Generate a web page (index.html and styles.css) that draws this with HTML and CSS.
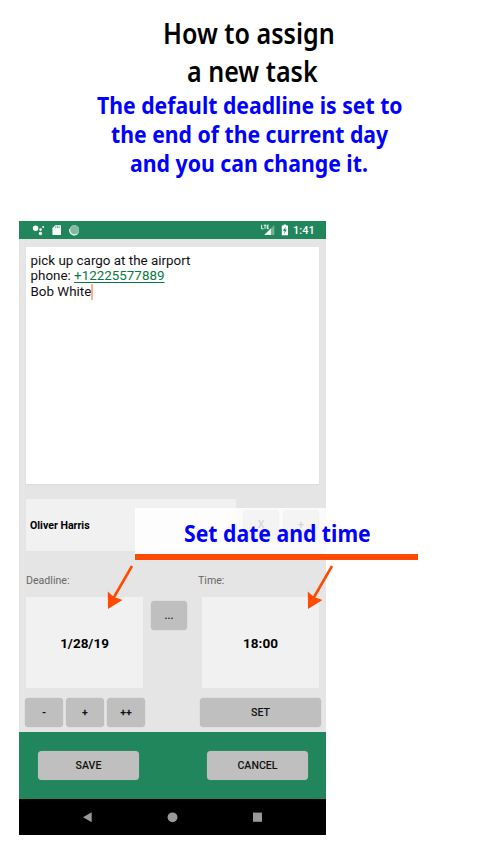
FILE: index.html
```html
<!DOCTYPE html>
<html lang="en">
<head>
<meta charset="utf-8">
<title>How to assign a new task</title>
<link rel="stylesheet" href="styles.css">
</head>
<body>
<header class="intro">
  <h1><span class="line t1">How to assign</span><span class="line t2">a new task</span></h1>
  <p><span class="line b1">The default deadline is set to</span><span class="line b2">the end of the current day</span><span class="line b3">and you can change it.</span></p>
</header>
<main class="phone">
  <div class="status">
    <svg class="left-icons" width="60" height="18" viewBox="0 0 60 18">
      <g fill="#fff"><circle cx="16.6" cy="7.2" r="2.7"/><circle cx="21.6" cy="8.6" r="1.3"/><circle cx="24.2" cy="6" r=".9"/><circle cx="21.4" cy="12.5" r="1.7"/>
      <path d="M36.3 4.2h5.7v9.9h-8.6V7.3z"/></g>
      <path d="M36.8 5.2v2M38.5 5.2v2M40.1 5.2v2" stroke="#21865b" stroke-width=".7"/>
      <circle cx="55.4" cy="9.2" r="4.7" fill="#83b99f" stroke="#a2cab7"/>
      <path d="M50.8 8a4.8 4.8 0 0 0 7.8 4.7" fill="none" stroke="#e6f3ed" stroke-width="1.1"/>
    </svg>
    <svg class="right-icons" width="32" height="18" viewBox="0 0 32 18">
      <path d="M15.3 4v10H5.3z" fill="#72b194"/><path d="M11.8 7.5V14H5.3z" fill="#fff"/>
      <path d="M2.6 3.8v4h2M4.7 4.2h2.7M6 4.2v3.6M9.8 4.2H8.2v3.4h1.6M8.2 6h1.6" fill="none" stroke="#fff" stroke-width=".9"/>
      <path d="M24.6 3.5h2.6v1h1.8v9.8h-6.2V4.5h1.8z" fill="#fff"/><path d="M26.6 5.8l-2.7 4h1.7l-.4 3 2.7-4.2h-1.7z" fill="#21865b"/>
    </svg>
    <span class="clock">1:41</span>
  </div>
  <section class="form">
    <div class="note">pick up cargo at the airport<br>phone: <span class="tel">+12225577889</span><br>Bob White<i class="caret"></i></div>
    <div class="person"><div class="name">Oliver Harris</div><button>X</button><button>+</button></div>
    <div class="labels"><span>Deadline:</span><span>Time:</span></div>
    <div class="values"><div class="value">1/28/19</div><button>...</button><div class="value time">18:00</div></div>
    <div class="controls"><button>-</button><button>+</button><button>++</button><button class="set">SET</button></div>
  </section>
  <footer class="actions"><button>SAVE</button><button>CANCEL</button></footer>
  <nav class="nav">
    <svg width="307" height="36" viewBox="0 0 307 36" fill="#999"><path d="M64 18.3l8.7-5v10z"/><circle cx="153.5" cy="18.3" r="4.9"/><path d="M234 13.6h9v9.2h-9z"/></svg>
  </nav>
</main>
<div class="callout"><span class="line c1">Set date and time</span></div>
<svg class="arrows" width="240" height="50" viewBox="100 562 240 50">
  <g id="arrow"><path d="M132 566L113.5 598" stroke="#ff4a00" stroke-width="2.6"/><path d="M108 609l-.2-17.6 5.7 5.4 8.9 3.2z" fill="#ff4a00"/></g>
  <use href="#arrow" x="200"/>
</svg>
</body>
</html>
```
FILE: styles.css
```css
* { box-sizing: border-box; }
body { margin: 0; width: 500px; height: 850px; background: #fff; position: relative; overflow: hidden; font-family: Roboto, sans-serif; color: #000; }
svg { display: block; }
.intro { height: 221px; padding-top: 14px; font-family: "Noto Sans", sans-serif; }
h1, p { margin: 0; }
.line { display: block; width: max-content; white-space: nowrap; transform-origin: 0 0; font-weight: 700; }
h1 { font-size: 29px; line-height: 38px; }
h1 .line { font-weight: 600; }
.intro p { font-size: 22.5px; line-height: 29px; color: #0000ff; margin-top: 1px; }
.t1 { margin-left: 163px; transform: scaleX(.865); }
.t2 { margin-left: 187px; transform: scaleX(.865); }
.b1 { margin-left: 97px; transform: scaleX(.942); }
.b2 { margin-left: 111px; transform: scaleX(.942); }
.b3 { margin-left: 130px; transform: scaleX(.945); }
.phone { width: 307px; height: 614px; margin-left: 19px; background: #e5e5e5; }
.status { height: 18px; background: #21865b; display: flex; color: #fff; }
.right-icons { margin-left: 180px; }
.clock { margin-left: 2px; font: 500 11px/19px Roboto, sans-serif; }
.form { height: 493px; padding: 8px 5px 0 7px; }
.note { width: 293px; height: 237px; background: #fff; padding: 5.5px 4.5px; font-size: 13.4px; line-height: 15.7px; box-shadow: 0 1px 1px #ddd; color: #111; }
.tel { color: #087a42; text-decoration: underline; text-underline-offset: 2px; text-decoration-thickness: 1px; }
.caret { display: inline-block; width: 2px; height: 16px; background: #ffae8d; vertical-align: -4px; }
.person { display: flex; margin-top: 15px; height: 51px; align-items: center; }
.name { width: 210px; height: 52px; line-height: 53px; background: #f1f1f1; padding-left: 4px; font-size: 10.6px; font-weight: 700; }
button { border: 0; border-radius: 4px; background: #bfbfbf; box-shadow: 0 0 1px #aaa; font: 500 10.6px/30px Roboto, sans-serif; color: #111; padding: 0; height: 29px; width: 36px; flex: none; }
.person button { margin-left: 7px; }
.person button + button { margin-left: 4px; }
.labels { display: flex; margin-top: 22px; height: 16px; font-size: 10.6px; line-height: 17px; color: #666; }
.labels span:first-child { width: 172px; }
.values { display: flex; margin-top: 9px; }
.value { width: 117px; height: 91px; line-height: 93px; background: #f1f1f1; text-align: center; font-size: 13.5px; font-weight: 700; }
.values button { margin: 4px 0 0 8px; }
.time { margin-left: 15px; }
.controls { display: flex; margin: 10px 0 0 -1px; gap: 3px; }
.controls button { width: 38px; font-weight: 700; }
.controls .set { width: 121px; margin-left: 52px; font-weight: 500; }
.actions { height: 67px; background: #21865b; padding: 19px 18px 0 19px; display: flex; justify-content: space-between; }
.actions button { width: 101px; }
.nav { height: 36px; background: #000; }
.callout { position: absolute; left: 135px; top: 508px; width: 283px; height: 52px; background: rgba(255,255,255,.82); border-bottom: 6px solid #ff4a00; font: 22.5px/30px "Noto Sans", sans-serif; color: #0000ff; padding-top: 11px; }
.c1 { margin-left: 49px; transform: scaleX(.942); }
.arrows { position: absolute; left: 100px; top: 562px; }
```
